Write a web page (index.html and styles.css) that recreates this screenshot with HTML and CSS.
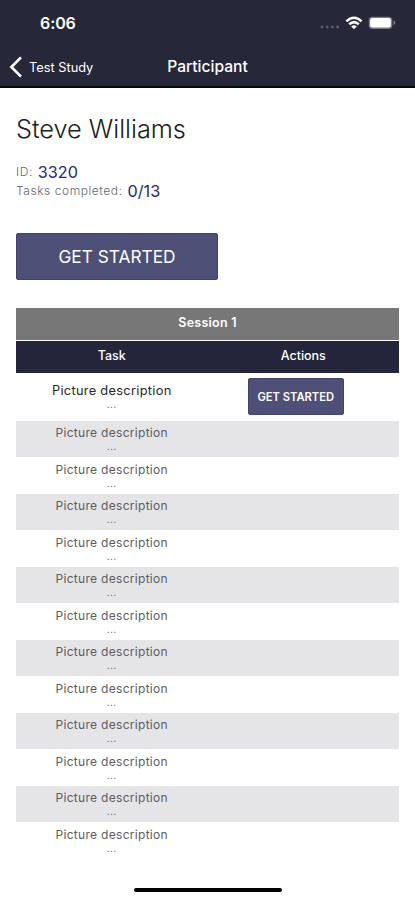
FILE: index.html
```
<!DOCTYPE html>
<html lang="en">
<head>
<meta charset="utf-8">
<title>Participant</title>
<link rel="stylesheet" href="styles.css">
</head>
<body>
<header class="header">
  <div class="status">
    <span class="time">6:06</span>
    <span class="indicators">
      <svg class="dots" width="20" height="4" viewBox="0 0 20 4"><g fill="#5c5d70"><circle cx="2" cy="2" r="1.4"/><circle cx="7.2" cy="2" r="1.4"/><circle cx="12.4" cy="2" r="1.4"/><circle cx="17.6" cy="2" r="1.4"/></g></svg>
      <svg class="wifi" width="18" height="14" viewBox="0 0 18 14"><g fill="none" stroke="#fff" stroke-width="2.5"><path d="M1.4 5.3Q9-1.7 16.6 5.3"/><path d="M4.2 8.3Q9 4 13.8 8.3"/></g><path fill="#fff" d="M6.2 10.4Q9 8 11.8 10.4L9 13.3Z"/></svg>
      <svg class="battery" width="28" height="14" viewBox="0 0 28 14"><rect x=".7" y=".7" width="23.6" height="12.2" rx="3.7" fill="#777788"/><rect x="2.1" y="2.1" width="20.8" height="9.4" rx="2.2" fill="#fff"/><path d="M25.5 4.6Q27.4 5.1 27.4 6.8T25.5 9Z" fill="#777788"/></svg>
    </span>
  </div>
  <nav class="nav">
    <a class="back"><svg width="14" height="22" viewBox="0 0 14 22"><path d="M12 1.4L2.4 11L12 20.6" fill="none" stroke="#fff" stroke-width="2.7"/></svg><span>Test Study</span></a>
    <span class="nav-title">Participant</span>
  </nav>
</header>
<main class="content">
  <h1 class="name">Steve Williams</h1>
  <div class="meta"><span class="label">ID:</span><span class="value">3320</span></div>
  <div class="meta"><span class="label">Tasks completed:</span><span class="value">0/13</span></div>
  <button class="start">GET STARTED</button>
  <section class="session">
    <h2 class="session-title">Session 1</h2>
    <div class="row head"><span>Task</span><span>Actions</span></div>
    <div class="row current"><div class="task"><span>Picture description</span><small>...</small></div><button class="row-start">GET STARTED</button></div>
    <div class="row"><div class="task"><span>Picture description</span><small>...</small></div></div>
    <div class="row"><div class="task"><span>Picture description</span><small>...</small></div></div>
    <div class="row"><div class="task"><span>Picture description</span><small>...</small></div></div>
    <div class="row"><div class="task"><span>Picture description</span><small>...</small></div></div>
    <div class="row"><div class="task"><span>Picture description</span><small>...</small></div></div>
    <div class="row"><div class="task"><span>Picture description</span><small>...</small></div></div>
    <div class="row"><div class="task"><span>Picture description</span><small>...</small></div></div>
    <div class="row"><div class="task"><span>Picture description</span><small>...</small></div></div>
    <div class="row"><div class="task"><span>Picture description</span><small>...</small></div></div>
    <div class="row"><div class="task"><span>Picture description</span><small>...</small></div></div>
    <div class="row"><div class="task"><span>Picture description</span><small>...</small></div></div>
    <div class="row"><div class="task"><span>Picture description</span><small>...</small></div></div>
  </section>
</main>
<div class="home-bar"></div>
</body>
</html>
```
FILE: styles.css
```
* { box-sizing: border-box; }
body {
  margin: 0;
  height: 900px;
  overflow: hidden;
  display: flex;
  flex-direction: column;
  background: #fff;
  color: #202024;
  font-family: Inter, "Liberation Sans", sans-serif;
}
.header {
  height: 88px;
  flex: none;
  background: #27273a;
  border-bottom: 2px solid #08080f;
  color: #fff;
}
.status {
  height: 46px;
  padding: 0 19px 0 40px;
  display: flex;
  justify-content: space-between;
  align-items: center;
}
.time { font-size: 16px; font-weight: 600; letter-spacing: -0.1px; }
.indicators { display: flex; align-items: center; }
.dots { margin: 8px 5px 0 0; }
.wifi { margin-right: 5px; }
.nav {
  height: 42px;
  display: grid;
  grid-template-columns: 1fr auto 1fr;
  align-items: center;
}
.back {
  display: flex;
  align-items: center;
  gap: 6px;
  padding-left: 9px;
  font-size: 12.8px;
}
.nav-title { font-size: 15.6px; font-weight: 500; line-height: 20px; padding-bottom: 1px; }
.content { padding: 0 16px; height: 770px; }
.name {
  margin: 24px 0 17px;
  font-size: 25.3px;
  line-height: 34px;
  font-weight: 300;
}
.meta { display: flex; height: 19px; line-height: 17px; }
.label { font-size: 12px; font-weight: 300; color: #66666c; letter-spacing: 0.55px; margin-right: 5px; }
.value { font-size: 16.2px; color: #28286e; padding-top: 1px; }
button {
  display: block;
  padding: 0;
  border: 1px solid #434369;
  border-radius: 2px;
  background: #4e5078;
  color: #fff;
  font-family: inherit;
}
.start { width: 202px; height: 47px; margin-top: 32px; font-size: 17.3px; }
.session { margin-top: 28px; width: 383px; }
.session-title {
  margin: 0 0 1px;
  height: 32px;
  line-height: 30px;
  background: #777;
  color: #fff;
  text-align: center;
  font-size: 12.5px;
  font-weight: 600;
  letter-spacing: 0.25px;
}
.row {
  height: 36.5px;
  display: grid;
  grid-template-columns: 1fr 1fr;
  justify-items: center;
}
.row.head {
  height: 32px;
  line-height: 29px;
  background: #24243a;
  color: #fff;
  font-size: 12.5px;
  font-weight: 500;
}
.row:nth-child(even) { background: #e5e5e7; }
.row.head:nth-child(even) { background: #24243a; }
.task {
  display: flex;
  flex-direction: column;
  align-items: center;
  padding-top: 3.5px;
  font-size: 12px;
  line-height: 17px;
  letter-spacing: 0.3px;
  color: #5c5c62;
}
.task small { font-size: 10px; line-height: 10px; letter-spacing: 0.4px; }
.row.current { height: 47.5px; align-items: start; }
.current .task { padding-top: 9px; font-size: 12.8px; color: #28282c; }
.current .task small { color: #5c5c62; }
.row-start { width: 96px; height: 37px; margin: 5px 15px 0 0; font-size: 11.2px; font-weight: 600; }
.home-bar { width: 148px; height: 4px; margin: 30px auto 0; border-radius: 2px; background: #000; }
```
